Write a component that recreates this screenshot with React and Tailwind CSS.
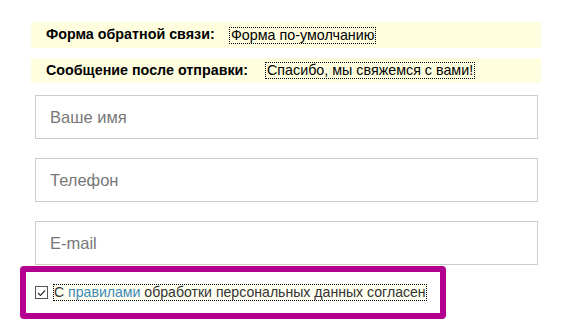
export default function App() {
  const fields = ["Ваше имя", "Телефон", "E-mail"]

  return (
    <div className="w-[587px] h-[334px] bg-white font-['Liberation_Sans',Arial,sans-serif] overflow-hidden">
      <div className="pl-[31px] pt-[22px] w-[541px] space-y-[10px]">
        <div className="h-[26px] bg-[#ffffe0] flex items-center pl-[15px] text-[14.3px] text-black">
          <span className="font-bold w-[183px]">Форма обратной связи:</span>
          <span className="border border-dotted border-black px-px leading-[15px]">Форма по-умолчанию</span>
        </div>
        <div className="h-[25px] bg-[#ffffe0] flex items-center pl-[15px] text-[14.3px] text-black">
          <span className="font-bold w-[219px]">Сообщение после отправки:</span>
          <span className="border border-dotted border-black px-px leading-[15px]">Спасибо, мы свяжемся с вами!</span>
        </div>
      </div>

      <div className="pl-[35px] pt-[12px] flex flex-col gap-[19px]">
        {fields.map(f => (
          <div key={f} className="w-[503px] h-[44px] border border-[#cccccc] flex items-center pl-[14px] text-[16.5px] text-[#777777]">
            {f}
          </div>
        ))}
      </div>

      <div className="ml-[20px] mt-[1px] w-[426px] h-[53px] border-[6px] border-[#b3008f] rounded-[4px] flex items-center pl-[9px]">
        <span className="w-[13px] h-[13px] border border-[#555] flex items-center justify-center mr-[5px]">
          <svg width="9" height="8" viewBox="0 0 9 8" fill="none">
            <path d="M1 4l2.5 2.5L8 1.5" stroke="#333" strokeWidth="1.2" />
          </svg>
        </span>
        <span className="border border-dotted border-black bg-[#fffff2] text-[14.1px] leading-[15px] text-[#333]">
          С <span className="text-[#3d88b8]">правилами</span> обработки персональных данных согласен
        </span>
      </div>
    </div>
  )
}
